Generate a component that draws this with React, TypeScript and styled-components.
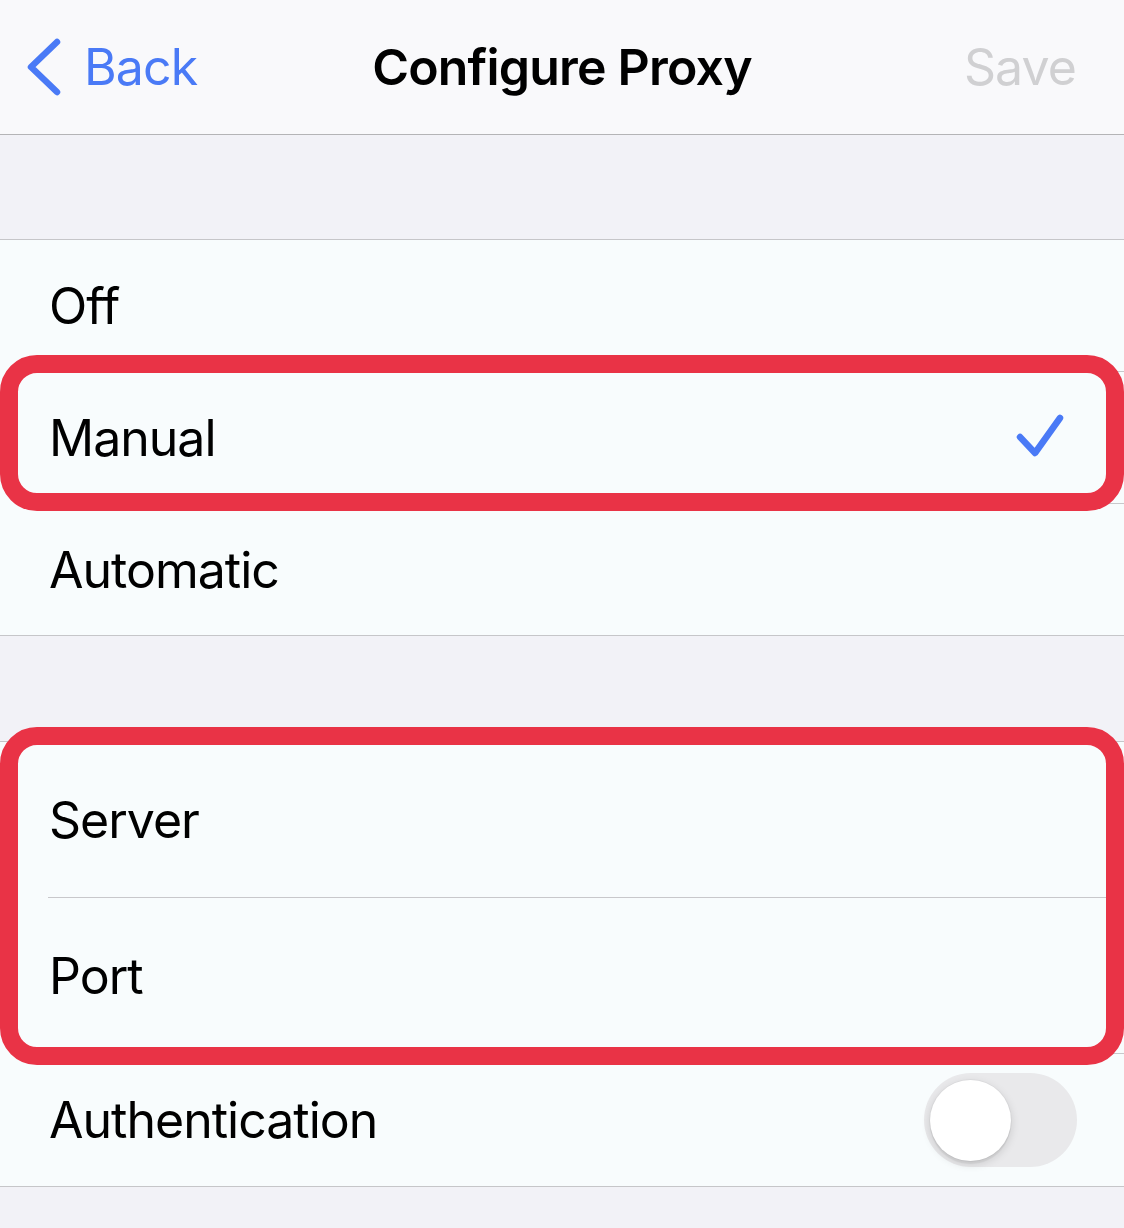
import React from "react";
import styled, { createGlobalStyle } from "styled-components";

const Global = createGlobalStyle`
  html, body { margin: 0; padding: 0; background: #f2f2f7; }
  body { font-family: Inter, "Noto Sans", sans-serif; -webkit-font-smoothing: antialiased; }
`;

const Page = styled.div`
  width: 1124px;
  min-height: 1228px;
  background: #f2f2f7;
  position: relative;
  display: flex;
  flex-direction: column;
`;

const NavBar = styled.header`
  height: 134px;
  background: #f9f9fb;
  border-bottom: 1px solid #b4b4b6;
  display: grid;
  grid-template-columns: 1fr auto 1fr;
  align-items: center;
  padding: 0 48px;
  box-sizing: content-box;
`;

const BackButton = styled.div`
  display: flex;
  align-items: center;
  gap: 22px;
  margin-left: -22px;
  color: #4a7af6;
  font-size: 50px;
  letter-spacing: -0.9px;
  justify-self: start;
`;

const Title = styled.div`
  font-size: 50px;
  font-weight: 600;
  color: #000;
  letter-spacing: -0.8px;
`;

const SaveButton = styled.div`
  justify-self: end;
  color: #d0d0d2;
  font-size: 50px;
  letter-spacing: -0.9px;
`;

const Gap = styled.div<{ $h: number }>`
  height: ${(p) => p.$h}px;
  background: #f2f2f7;
`;

const Group = styled.section`
  background: #f8fcfd;
  border-top: 1px solid #c6c6c9;
  border-bottom: 1px solid #c6c6c9;
`;

const Row = styled.div<{ $h: number; $sep?: boolean }>`
  height: ${(p) => p.$h}px;
  margin-left: 48px;
  padding-left: 1px;
  padding-right: 48px;
  display: flex;
  align-items: center;
  justify-content: space-between;
  font-size: 50px;
  color: #000;
  letter-spacing: -1px;
  border-bottom: ${(p) => (p.$sep ? "1px solid #c8c8cb" : "none")};
`;

const Fill = styled.div`
  flex: 1;
  background: #f2f2f7;
`;

const Toggle = styled.div`
  width: 153px;
  height: 94px;
  border-radius: 47px;
  background: #e9e9eb;
  display: flex;
  align-items: center;
  padding: 0 6px;
  box-sizing: border-box;
  margin-right: -1px;
`;

const Knob = styled.div`
  width: 81px;
  height: 81px;
  border-radius: 50%;
  background: #fff;
  box-shadow: 0 3px 10px rgba(0, 0, 0, 0.14), 0 3px 1px rgba(0, 0, 0, 0.05),
    0 0 0 1px rgba(0, 0, 0, 0.03);
`;

const CheckWrap = styled.span`
  display: flex;
  margin-right: 10px;
`;

const Highlight = styled.div<{ $top: number; $h: number }>`
  position: absolute;
  left: 0;
  top: ${(p) => p.$top}px;
  width: 1124px;
  height: ${(p) => p.$h}px;
  border: 18px solid #e93346;
  border-radius: 37px;
  box-sizing: border-box;
  pointer-events: none;
`;

const Chevron = () => (
  <svg width="36" height="58" viewBox="0 0 36 58">
    <path
      d="M31 4 L5 29 L31 54"
      fill="none"
      stroke="#4a7af6"
      strokeWidth="6.5"
      strokeLinecap="round"
      strokeLinejoin="round"
    />
  </svg>
);

const Check = () => (
  <CheckWrap>
    <svg width="50" height="48" viewBox="0 0 50 48">
      <path
        d="M4 23 L19 39 L44 4"
        fill="none"
        stroke="#4a7af6"
        strokeWidth="6.5"
        strokeLinecap="round"
        strokeLinejoin="round"
      />
    </svg>
  </CheckWrap>
);

export default function App() {
  return (
    <Page>
      <Global />
      <NavBar>
        <BackButton>
          <Chevron />
          <span>Back</span>
        </BackButton>
        <Title>Configure Proxy</Title>
        <SaveButton>Save</SaveButton>
      </NavBar>
      <Gap $h={104} />
      <Group>
        <Row $h={131} $sep>Off</Row>
        <Row $h={131} $sep>
          <span>Manual</span>
          <Check />
        </Row>
        <Row $h={131}>Automatic</Row>
      </Group>
      <Gap $h={105} />
      <Group>
        <Row $h={155} $sep>Server</Row>
        <Row $h={155} $sep>Port</Row>
        <Row $h={132}>
          <span>Authentication</span>
          <Toggle>
            <Knob />
          </Toggle>
        </Row>
      </Group>
      <Fill />
      <Highlight $top={355} $h={156} />
      <Highlight $top={727} $h={338} />
    </Page>
  );
}
